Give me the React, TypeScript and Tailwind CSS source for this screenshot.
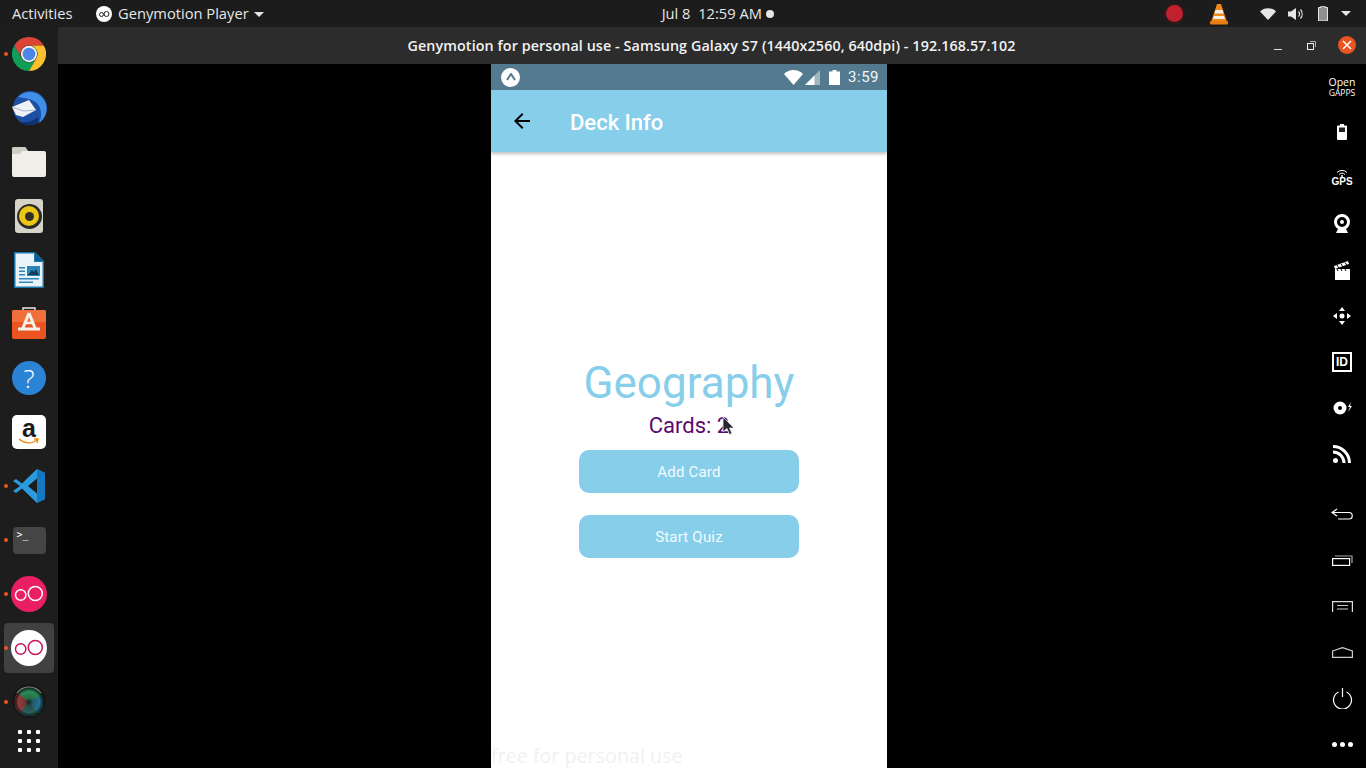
import type { ReactNode } from "react";

const ubuntu = "font-['Open_Sans','Noto_Sans',sans-serif]";

function Chrome() {
  return (
    <svg width="34" height="34" viewBox="0 0 48 48">
      <path d="M44.8 12A24 24 0 0 0 3.2 12L13.6 30A12 12 0 0 1 24 12Z" fill="#db4437" />
      <path d="M3.2 12A24 24 0 0 0 24 48L34.4 30A12 12 0 0 1 13.6 30Z" fill="#0f9d58" />
      <path d="M24 48A24 24 0 0 0 44.8 12H24A12 12 0 0 1 34.4 30Z" fill="#fbc02d" />
      <circle cx="24" cy="24" r="11.5" fill="#f1f1f1" />
      <circle cx="24" cy="24" r="9" fill="#4a86e8" />
    </svg>
  );
}

function Thunderbird() {
  return (
    <svg width="36" height="36" viewBox="0 0 36 36">
      <circle cx="19" cy="18" r="17" fill="#1d4fa3" />
      <path d="M7 7C15-1 30 0 35 14c2 8-1 15-7 19 4-9 2-18-5-22-6-3-11-3-16-4Z" fill="#3f8fe6" />
      <path d="M27 33c-6 3-14 3-19-1 6 1 14 0 19-5Z" fill="#12306b" />
      <path d="M1 17 18 10l7 10-13 7-7-2Z" fill="#eef1f6" />
      <path d="M1 17l12 4 12-1" fill="none" stroke="#a9b7cc" strokeWidth="1.200" />
    </svg>
  );
}

function Folder() {
  return (
    <svg width="34" height="30" viewBox="0 0 34 30">
      <path d="M2 0h11l3 4h16a2 2 0 0 1 2 2v22a2 2 0 0 1-2 2H2a2 2 0 0 1-2-2V2a2 2 0 0 1 2-2Z" fill="#efeee8" />
      <path d="M0 5V2a2 2 0 0 1 2-2h11l3 4h-6L8 7H0Z" fill="#cfcdc2" />
    </svg>
  );
}

function Rhythmbox() {
  return (
    <div className="grid h-[34px] w-[28px] place-items-center rounded-[3px] bg-[#d6d3c8]">
      <div className="grid size-[25px] place-items-center rounded-full bg-[#2b2b2b]">
        <div className="grid size-[20px] place-items-center rounded-full bg-[#ecc716]">
          <div className="size-[9px] rounded-full bg-[#333028]" />
        </div>
      </div>
    </div>
  );
}

function Writer() {
  return (
    <svg width="30" height="36" viewBox="0 0 30 36">
      <path d="M0 0h21l9 9v27H0Z" fill="#1b76ad" />
      <path d="M1.500 1.500H20V10h8.500v24.500h-27Z" fill="#eaf3f8" />
      <path d="M21 0l9 9h-9Z" fill="#0f5f91" />
      <path d="M5 15h6v1.500H5Zm0 3.500h6V20H5Zm0 3.500h6v1.500H5Zm0 4h20v1.500H5Zm0 3.500h14v1.500H5Z" fill="#2a86bb" />
      <rect x="13" y="14" width="13" height="10" fill="#2a86bb" />
      <path d="M14 23l4-5 2 2 2-3 3 6Z" fill="#123d57" />
    </svg>
  );
}

function SoftwareStore() {
  return (
    <svg className="mt-[-3px]" width="34" height="32" viewBox="0 0 34 32">
      <path d="M11 4V1h12v3" fill="none" stroke="#f1e9e2" strokeWidth="1.400" />
      <path d="M2 3h30a2 2 0 0 1 2 2v25a2 2 0 0 1-2 2H2a2 2 0 0 1-2-2V5a2 2 0 0 1 2-2Z" fill="#e95420" />
      <path d="M0 5a2 2 0 0 1 2-2h30a2 2 0 0 1 2 2v10H0Z" fill="#f0703c" />
      <path d="M17 6 11 21M17 6l6 15M6 22h22" fill="none" stroke="#f6f1ec" strokeWidth="3" />
      <path d="M13 16h8" stroke="#f6f1ec" strokeWidth="2.500" />
    </svg>
  );
}

function Amazon() {
  return (
    <div className="relative flex size-[34px] justify-center rounded-[5px] bg-white">
      <span className="font-['Liberation_Sans',sans-serif] text-[25px] leading-[26px] font-bold text-[#1a1a1a]">a</span>
      <svg className="absolute bottom-[3px] left-[6px]" width="22" height="8" viewBox="0 0 22 8">
        <path d="M1 1c6 5 13 5 18 1M16 1l4 0-1 4" fill="none" stroke="#f08c16" strokeWidth="1.400" />
      </svg>
    </div>
  );
}

function VSCode() {
  return (
    <svg width="32" height="34" viewBox="0 0 32 34">
      <path d="M24 0 32 4v26l-8 4L9 19.500 3 24l-3-2 7-5-7-5 3-2 6 4.500Z" fill="#2a9bdf" />
      <path d="M24 0 32 4v26l-8 4Z" fill="#1577bd" />
      <path d="M24 9.500 15 17l9 7.500Z" fill="#1c1c1c" />
    </svg>
  );
}

function Terminal() {
  return (
    <div className="h-[27px] w-[33px] rounded-[4px] bg-[#454545] pl-[4px] pt-[1px] font-['DejaVu_Sans_Mono',monospace] text-[10px] leading-[13px] text-white">
      &gt;_
    </div>
  );
}

function Geny({ inverted }: { inverted?: boolean }) {
  const ring = inverted ? "#c2185b" : "#ffffff";
  return (
    <svg width="36" height="36" viewBox="0 0 36 36">
      <circle cx="18" cy="18" r="18" fill={inverted ? "#ffffff" : "#e91e63"} />
      <circle cx="9.700" cy="19" r="5.200" fill="none" stroke={ring} strokeWidth="1.500" />
      <circle cx="24.300" cy="17.500" r="7" fill="none" stroke={ring} strokeWidth="1.500" />
    </svg>
  );
}

function Lens() {
  return (
    <svg className="mt-[-2px]" width="34" height="34" viewBox="0 0 34 34">
      <defs>
        <radialGradient id="shade" cx="50%" cy="50%" r="50%">
          <stop offset="0%" stopColor="#0c1a16" stopOpacity="0.9" />
          <stop offset="30%" stopColor="#0c1a16" stopOpacity="0.25" />
          <stop offset="75%" stopColor="#000" stopOpacity="0" />
          <stop offset="100%" stopColor="#000" stopOpacity="0.7" />
        </radialGradient>
      </defs>
      <circle cx="17" cy="17" r="17" fill="#161616" />
      <path d="M5 9A15 15 0 0 1 29 9" fill="none" stroke="#8d8d8d" strokeWidth="1.200" />
      <circle cx="17" cy="18" r="14" fill="#2b8a57" />
      <path d="M17 18 6 9A14 14 0 0 0 8 29Z" fill="#8f3f3f" />
      <path d="M17 18 8 29A14 14 0 0 0 26 29Z" fill="#2b5f5a" />
      <path d="M17 18 26 29A14 14 0 0 0 29 11Z" fill="#28708f" />
      <circle cx="17" cy="18" r="14" fill="url(#shade)" />
    </svg>
  );
}

function AppGrid() {
  return (
    <div className="grid grid-cols-3 gap-[5px]">
      {Array.from({ length: 9 }).map((_, i) => (
        <div key={i} className="size-[4px] rounded-[1px] bg-white" />
      ))}
    </div>
  );
}

function Dock() {
  const apps: { icon: ReactNode; running?: boolean; active?: boolean }[] = [
    { icon: <Chrome />, running: true },
    { icon: <Thunderbird /> },
    { icon: <Folder /> },
    { icon: <Rhythmbox /> },
    { icon: <Writer /> },
    { icon: <SoftwareStore /> },
    {
      icon: (
        <div className="grid size-[34px] place-items-center rounded-full bg-[#2b83d6] font-['Open_Sans',sans-serif] text-[26px] leading-none font-light text-white">
          ?
        </div>
      ),
    },
    { icon: <Amazon /> },
    { icon: <VSCode />, running: true },
    { icon: <Terminal />, running: true },
    { icon: <Geny />, running: true },
    { icon: <Geny inverted />, running: true, active: true },
    { icon: <Lens />, running: true },
  ];

  return (
    <aside className="flex w-[58px] shrink-0 flex-col bg-[#1d1d1d] pt-0">
      {apps.map((app, i) => (
        <div key={i} className="relative flex h-[54px] w-full shrink-0 items-center justify-center">
          {app.active && <div className="absolute left-[4px] top-[2px] h-[50px] w-[50px] rounded-[4px] bg-[#414141]" />}
          {app.running && <div className="absolute left-[4px] top-[25px] size-[4px] rounded-full bg-[#e95420]" />}
          <div className="relative">{app.icon}</div>
        </div>
      ))}
      <div className="flex justify-center pt-[1px]">
        <AppGrid />
      </div>
    </aside>
  );
}

function TopBar() {
  return (
    <header className={`flex h-[27px] shrink-0 items-center bg-[#1c1c1c] pl-[12px] text-[14.7px] text-[#e6e6e6] ${ubuntu}`}>
      <span className="w-[84px]">Activities</span>
      <svg width="16" height="16" viewBox="0 0 16 16">
        <circle cx="8" cy="8" r="8" fill="#fff" />
        <circle cx="5.500" cy="8.500" r="2" fill="none" stroke="#222" strokeWidth="1" />
        <circle cx="10.500" cy="8" r="2.500" fill="none" stroke="#222" strokeWidth="1" />
      </svg>
      <span className="ml-[6px]">Genymotion Player</span>
      <div className="ml-[5px] mt-[1px] size-0 border-x-[5px] border-t-[5px] border-x-transparent border-t-[#e6e6e6]" />
      <span className="ml-[398px]">Jul 8&nbsp;&nbsp;12:59 AM</span>
      <div className="ml-[4px] size-[8px] rounded-full bg-[#e6e6e6]" />
      <div className="ml-auto flex items-center pr-[15px]">
        <div className="grid size-[22px] place-items-center rounded-full bg-[#2a1a1a]">
          <div className="size-[17px] rounded-full bg-[#c3202f]" />
        </div>
        <svg className="ml-[24px]" width="20" height="22" viewBox="0 0 20 22">
          <path d="M8 1h4l6 18H2Z" fill="#f08a16" />
          <path d="M6.500 7h7l1 3.500h-9ZM5 13h10l1 3H4Z" fill="#f3f0ea" />
          <rect x="1" y="18" width="18" height="3.500" rx="1" fill="#e77d10" />
        </svg>
        <svg className="ml-[31px]" width="16" height="12" viewBox="0 0 16 12">
          <path d="M0 3.500C4-1 12-1 16 3.500L8 12Z" fill="#e6e6e6" />
        </svg>
        <svg className="ml-[12px]" width="16" height="14" viewBox="0 0 16 14">
          <path d="M0 4.500h3L8 1v12L3 9.500H0Z" fill="#e6e6e6" />
          <path d="M10.500 4.500a3.500 3.500 0 0 1 0 5M12.500 2.500a7 7 0 0 1 0 9" fill="none" stroke="#e6e6e6" strokeWidth="1.200" />
        </svg>
        <svg className="ml-[14px]" width="10" height="15" viewBox="0 0 10 15">
          <path d="M3 0h4v1.500h2.500v13.500H.5V1.500H3Z" fill="#8f8f8f" stroke="#e6e6e6" strokeWidth="1" />
        </svg>
        <div className="ml-[13px] size-0 border-x-[5px] border-t-[5px] border-x-transparent border-t-[#e6e6e6]" />
      </div>
    </header>
  );
}

function TitleBar() {
  return (
    <div className={`relative flex h-[37px] shrink-0 items-center justify-center bg-[#2c2c2c] text-[14.3px] font-semibold text-[#f2f2f2] ${ubuntu}`}>
      <span className="ml-[-1px] tracking-[0.1px]">Genymotion for personal use - Samsung Galaxy S7 (1440x2560, 640dpi) - 192.168.57.102</span>
      <div className="absolute right-[10px] top-[9px] flex items-center">
        <div className="mr-[25px] mt-[8px] h-[1px] w-[8px] bg-[#e0e0e0]" />
        <svg className="mr-[22px]" width="9" height="9" viewBox="0 0 9 9">
          <path d="M3 .5h5.500V6" fill="none" stroke="#b0b0b0" strokeWidth="1" />
          <rect x=".5" y="2.500" width="6" height="6" fill="none" stroke="#eee" strokeWidth="1" />
        </svg>
        <div className="relative size-[18px] rounded-full bg-[#e95420]">
          <svg className="absolute left-[4px] top-[4px]" width="10" height="10" viewBox="0 0 10 10">
            <path d="M1 1l8 8M9 1l-8 8" stroke="#fff" strokeWidth="1.500" />
          </svg>
        </div>
      </div>
    </div>
  );
}

function StatusBar() {
  return (
    <div className="flex h-[26px] shrink-0 items-center bg-[#537a8e] pl-[10px] pr-[8px] font-['Roboto',sans-serif]">
      <div className="grid size-[19px] place-items-center rounded-full bg-white">
        <svg width="10" height="8" viewBox="0 0 10 8">
          <path d="M1 7 5 1l4 6" fill="none" stroke="#537a8e" strokeWidth="2" />
        </svg>
      </div>
      <svg className="ml-auto" width="19" height="15" viewBox="0 0 19 15">
        <path d="M0 4C5-1.200 14-1.200 19 4L9.500 15Z" fill="#fff" />
      </svg>
      <svg className="ml-[2px]" width="15" height="15" viewBox="0 0 15 15">
        <path d="M15 0v15H0Z" fill="#9fb5c0" />
        <path d="M9.500 5.500V15H0Z" fill="#fff" />
      </svg>
      <svg className="ml-[9px]" width="11" height="15" viewBox="0 0 11 15">
        <path d="M3.500 0h4v1.500H11V15H0V1.500h3.500Z" fill="#fff" />
      </svg>
      <span className="ml-[8px] text-[15px] leading-none tracking-[0.5px] text-[#f4f7f8]">3:59</span>
    </div>
  );
}

function Phone() {
  return (
    <section className="relative flex w-[396px] shrink-0 flex-col bg-white font-['Roboto',sans-serif]">
      <StatusBar />
      <div className="z-10 flex h-[62px] shrink-0 items-center bg-[#87ceeb] pl-[19px] shadow-[0_2px_3px_rgba(0,0,0,0.25)]">
        <svg width="24" height="24" viewBox="0 0 24 24">
          <path d="M20 11H7.830l5.590-5.590L12 4l-8 8 8 8 1.410-1.410L7.830 13H20v-2z" fill="#000" />
        </svg>
        <span className="ml-[36px] mt-[2px] text-[22px] font-medium text-white">Deck Info</span>
      </div>
      <div className="flex flex-1 flex-col items-center justify-center pb-[3px]">
        <h1 className="pt-[1px] text-[44px] leading-[46px] text-[#87ceeb]">Geography</h1>
        <div className="relative mt-[7px] text-[22px] leading-[26px] text-[#5b0a6e]">
          Cards: 2
          <svg className="absolute right-[-6px] top-[3px]" width="13" height="20" viewBox="0 0 13 20">
            <path d="M1 1v15l4-3.500 2.500 6 2.500-1-2.500-5.500H12Z" fill="#26262c" stroke="#e8e8e8" strokeWidth="0.800" />
          </svg>
        </div>
        <button className="mt-[11px] h-[43px] w-[220px] rounded-[10px] bg-[#87ceeb] pt-[2px] text-[15px] tracking-[0.2px] text-[#f2fbff]">Add Card</button>
        <button className="mt-[22px] h-[43px] w-[220px] rounded-[10px] bg-[#87ceeb] pt-[2px] text-[15px] tracking-[0.2px] text-[#f2fbff]">Start Quiz</button>
      </div>
      <span className={`absolute bottom-0 left-0 text-[19.700px] leading-[25px] text-[#f0f1f2] ${ubuntu}`}>free for personal use</span>
    </section>
  );
}

function ToolRow({ children }: { children: ReactNode }) {
  return <div className="flex h-[46px] shrink-0 items-center justify-center">{children}</div>;
}

function Toolbar() {
  return (
    <nav className="ml-auto flex w-[48px] flex-col text-white">
      <div className="flex h-[45px] shrink-0 flex-col items-center justify-center font-['Open_Sans',sans-serif]">
        <span className="text-[10.500px] leading-[11px]">Open</span>
        <span className="text-[8.500px] leading-[9px]">GAPPS</span>
      </div>
      <ToolRow>
        <svg width="10" height="16" viewBox="0 0 10 16">
          <path d="M3 0h4v1.500h2a1 1 0 0 1 1 1V15a1 1 0 0 1-1 1H1a1 1 0 0 1-1-1V2.500a1 1 0 0 1 1-1h2Z" fill="#fff" />
          <rect x="2" y="3.500" width="6" height="4.500" fill="#222" />
        </svg>
      </ToolRow>
      <ToolRow>
        <div className="flex flex-col items-center">
          <svg width="12" height="7" viewBox="0 0 12 7">
            <path d="M1 2.500a7 7 0 0 1 10 0M3 4.500a4 4 0 0 1 6 0" fill="none" stroke="#fff" strokeWidth="1" />
            <circle cx="6" cy="6" r="1" fill="#fff" />
          </svg>
          <span className="font-['Liberation_Sans',sans-serif] text-[10px] leading-[10px] font-bold">GPS</span>
        </div>
      </ToolRow>
      <ToolRow>
        <svg width="16" height="20" viewBox="0 0 16 20">
          <circle cx="8" cy="8" r="6.500" fill="none" stroke="#fff" strokeWidth="3" />
          <circle cx="8" cy="8" r="2" fill="#fff" />
          <path d="M4 15h8l2 4H2Z" fill="#fff" />
        </svg>
      </ToolRow>
      <ToolRow>
        <svg width="17" height="19" viewBox="0 0 17 19">
          <path d="M1 8h15v11H1Z" fill="#fff" />
          <path d="M0 5 14 0l1 3L1 8Z" fill="#fff" />
          <path d="M3 4l2 3M7 3l2 3M11 1.500l2 3" stroke="#000" strokeWidth="1" />
          <path d="M3 8l1 2M7 8l1 2M11 8l1 2" stroke="#000" strokeWidth="1" />
        </svg>
      </ToolRow>
      <ToolRow>
        <svg width="20" height="20" viewBox="0 0 20 20">
          <path d="M10 1l3 4H7ZM10 19l-3-4h6ZM1 10l4-3v6ZM19 10l-4 3V7Z" fill="#fff" />
          <circle cx="10" cy="10" r="2.500" fill="#fff" />
        </svg>
      </ToolRow>
      <ToolRow>
        <div className="flex h-[20px] w-[20px] items-center justify-center border-2 border-white font-['Liberation_Sans',sans-serif] text-[12px] leading-none font-bold">
          ID
        </div>
      </ToolRow>
      <ToolRow>
        <svg width="19" height="14" viewBox="0 0 19 14">
          <circle cx="7" cy="7" r="6.500" fill="#fff" />
          <circle cx="7" cy="7" r="2" fill="#000" />
          <path d="M18 1l-3 5h2l-2 5 4-6h-2Z" fill="#fff" />
        </svg>
      </ToolRow>
      <ToolRow>
        <svg width="18" height="18" viewBox="0 0 18 18">
          <circle cx="2.500" cy="15.500" r="2.500" fill="#fff" />
          <path d="M0 7a11 11 0 0 1 11 11M0 1.500A16.500 16.500 0 0 1 16.500 18" fill="none" stroke="#fff" strokeWidth="3" />
        </svg>
      </ToolRow>
      <div className="h-[14px] shrink-0" />
      <ToolRow>
        <svg width="22" height="12" viewBox="0 0 22 12">
          <path d="M6 1 1 4.500 6 8M1 4.500h17a3 3 0 0 1 0 6.500H7" fill="none" stroke="#fff" strokeWidth="1.200" />
        </svg>
      </ToolRow>
      <ToolRow>
        <svg width="21" height="11" viewBox="0 0 21 11">
          <rect x=".6" y="3.600" width="17" height="6.800" fill="none" stroke="#fff" strokeWidth="1.200" />
          <path d="M3 1h17v7" fill="none" stroke="#aaa" strokeWidth="1.200" />
        </svg>
      </ToolRow>
      <ToolRow>
        <svg width="21" height="11" viewBox="0 0 21 11">
          <path d="M.6 11V.6h19.800V11" fill="none" stroke="#ddd" strokeWidth="1.200" />
          <path d="M5 4.500h11M5 8h11" stroke="#ccc" strokeWidth="1.200" />
        </svg>
      </ToolRow>
      <ToolRow>
        <svg width="21" height="11" viewBox="0 0 21 11">
          <path d="M.6 4 10.500.6 20.400 4v6.400H.6Z" fill="none" stroke="#ccc" strokeWidth="1.200" />
        </svg>
      </ToolRow>
      <ToolRow>
        <svg width="21" height="21" viewBox="0 0 21 21">
          <path d="M6.500 4a9 9 0 1 0 8 0M10.500 0v9" fill="none" stroke="#fff" strokeWidth="1.200" />
        </svg>
      </ToolRow>
      <ToolRow>
        <div className="flex gap-[3px]">
          <div className="size-[5px] rounded-full bg-white" />
          <div className="size-[5px] rounded-full bg-white" />
          <div className="size-[5px] rounded-full bg-white" />
        </div>
      </ToolRow>
    </nav>
  );
}

export default function App() {
  return (
    <div className="flex h-[768px] w-[1366px] flex-col overflow-hidden bg-black">
      <TopBar />
      <div className="flex min-h-0 flex-1">
        <Dock />
        <main className="flex min-w-0 flex-1 flex-col">
          <TitleBar />
          <div className="flex min-h-0 flex-1 pl-[433px]">
            <Phone />
            <Toolbar />
          </div>
        </main>
      </div>
    </div>
  );
}
